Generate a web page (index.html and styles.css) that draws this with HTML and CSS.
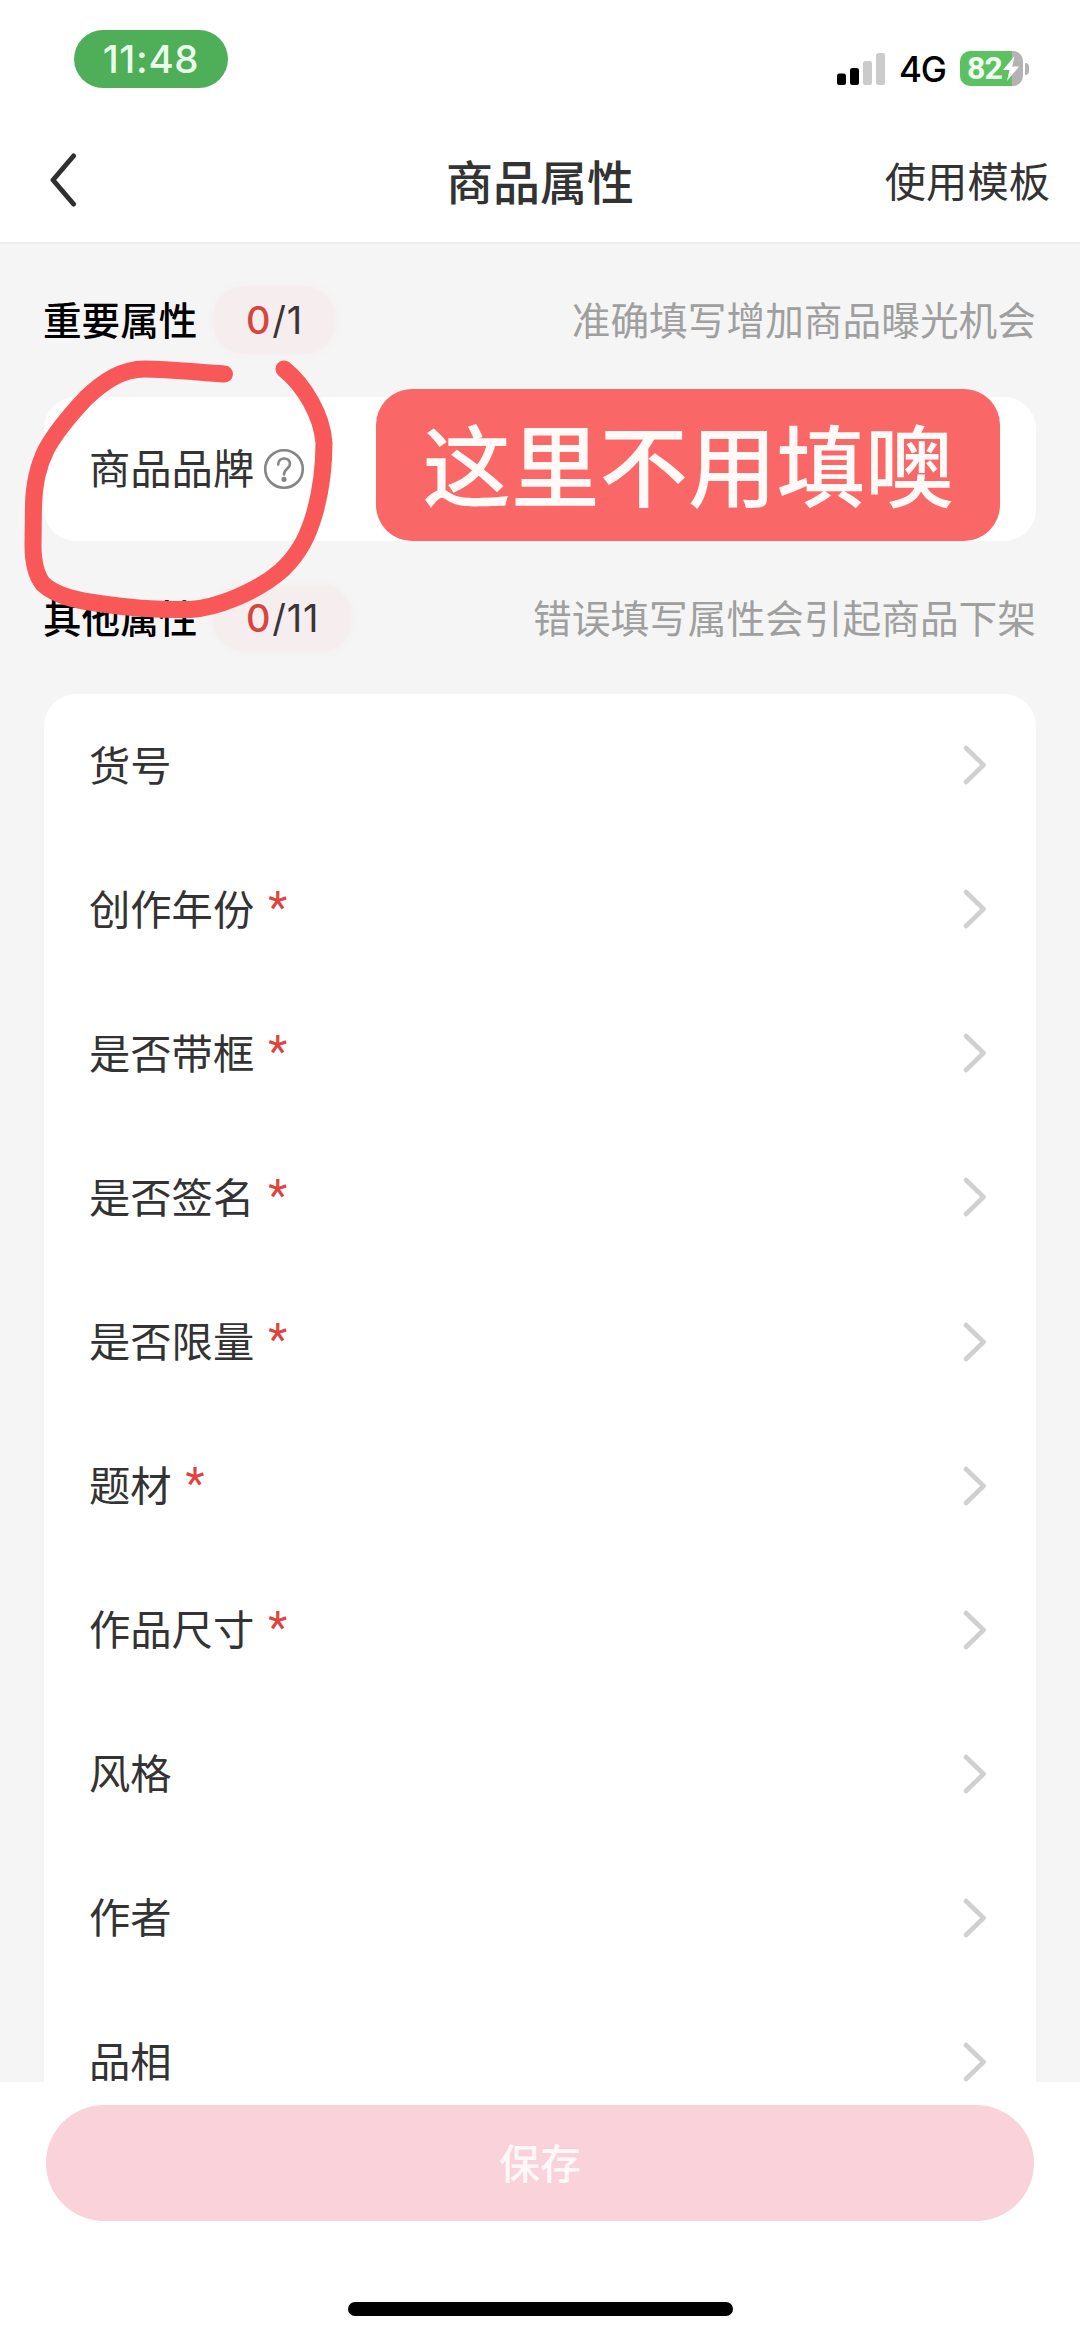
FILE: index.html
```html
<!DOCTYPE html>
<html lang="zh-CN">
<head>
<meta charset="utf-8">
<title>商品属性</title>
<link rel="stylesheet" href="styles.css">
</head>
<body>
<svg class="defs" width="0" height="0" aria-hidden="true">
  <symbol id="chevron" viewBox="0 0 24 40"><path d="M3 3 L20.5 20 L3 37" fill="none" stroke="currentColor" stroke-width="4.6" stroke-linecap="round" stroke-linejoin="round"/></symbol>
</svg>
<div class="screen">
  <div class="status">
    <div class="time">11:48</div>
    <div class="status-right">
      <svg class="signal" width="48" height="32" viewBox="0 0 48 32">
        <rect x="0" y="20.5" width="9" height="11.5" rx="2.5" fill="#000"/>
        <rect x="13" y="15" width="9" height="17" rx="2.5" fill="#000"/>
        <rect x="26" y="8" width="9" height="24" rx="2.5" fill="#cbcbcb"/>
        <rect x="39" y="0" width="9" height="32" rx="2.5" fill="#cbcbcb"/>
      </svg>
      <span class="net">4G</span>
      <div class="battery">
        <div class="battery-body">
          <span class="battery-num">82</span>
          <svg width="16" height="25" viewBox="0 0 16 25"><path d="M11.5 0 L0 14 H6.5 L4 25 L16 10.5 H9.2 Z" fill="#fff"/></svg>
        </div>
        <div class="battery-tip"></div>
      </div>
    </div>
  </div>

  <div class="nav">
    <svg class="back" width="28" height="54" viewBox="0 0 28 54"><path d="M24.5 3 L4 27 L24.5 51" fill="none" stroke="#2f2f2f" stroke-width="5" stroke-linecap="round" stroke-linejoin="round"/></svg>
    <h1 class="title">商品属性</h1>
    <a class="template">使用模板</a>
  </div>

  <main class="content">
    <div class="section-head">
      <h2 class="section-title">重要属性</h2>
      <div class="count"><b>0</b>/1</div>
      <p class="hint">准确填写增加商品曝光机会</p>
    </div>
    <div class="card brand">
      <div class="row">
        <span class="label">商品品牌</span>
        <svg class="help" width="42" height="42" viewBox="0 0 42 42" fill="none" stroke="#858585" stroke-width="2.6" stroke-linecap="round">
          <circle cx="21" cy="21" r="18.8"/>
          <path d="M15.2 16.5 C15.2 8.5 27 8.5 27 16 C27 20.5 21 20.5 21 26.5"/>
          <circle cx="21" cy="31.3" r="1.3" fill="#858585"/>
        </svg>
      </div>
      <div class="callout">这里不用填噢</div>
    </div>
    <div class="section-head second">
      <h2 class="section-title">其他属性</h2>
      <div class="count"><b>0</b>/11</div>
      <p class="hint">错误填写属性会引起商品下架</p>
    </div>
    <div class="card list">
      <div class="row"><span class="label">货号</span><svg class="chev"><use href="#chevron"/></svg></div>
      <div class="row"><span class="label">创作年份</span><i class="req">*</i><svg class="chev"><use href="#chevron"/></svg></div>
      <div class="row"><span class="label">是否带框</span><i class="req">*</i><svg class="chev"><use href="#chevron"/></svg></div>
      <div class="row"><span class="label">是否签名</span><i class="req">*</i><svg class="chev"><use href="#chevron"/></svg></div>
      <div class="row"><span class="label">是否限量</span><i class="req">*</i><svg class="chev"><use href="#chevron"/></svg></div>
      <div class="row"><span class="label">题材</span><i class="req">*</i><svg class="chev"><use href="#chevron"/></svg></div>
      <div class="row"><span class="label">作品尺寸</span><i class="req">*</i><svg class="chev"><use href="#chevron"/></svg></div>
      <div class="row"><span class="label">风格</span><svg class="chev"><use href="#chevron"/></svg></div>
      <div class="row"><span class="label">作者</span><svg class="chev"><use href="#chevron"/></svg></div>
      <div class="row"><span class="label">品相</span><svg class="chev"><use href="#chevron"/></svg></div>
    </div>
    <svg class="scribble" width="340" height="280" viewBox="0 350 340 280">
      <path d="M224.5 374 C195 372 165 369 145 369 C121 369 103 382 86 398 C70 415 56 431 46 450 C38 466 34 485 33.5 505 L33 545 C33 560 36 575 43 584 C57 597 80 601 103 604 C130 608 165 610 190 609.5 C215 608 256 593 282 570 C301 552 309 533 315 512 C321 490 324 465 324 443 C322 415 304 385 284 369" fill="none" stroke="#f95858" stroke-width="17" stroke-linecap="round" stroke-linejoin="round"/>
    </svg>
  </main>

  <div class="footer">
    <button class="save">保存</button>
    <div class="home"></div>
  </div>
</div>
</body>
</html>
```
FILE: styles.css
```css
* {
  box-sizing: border-box;
  margin: 0;
  padding: 0;
}

body {
  width: 1080px;
  background: #fff;
  font-family: "Noto Sans CJK SC", sans-serif;
  color: #333;
}

.defs {
  display: block;
}

.screen {
  display: flex;
  flex-direction: column;
  height: 2338px;
  overflow: hidden;
}

/* status bar */
.status {
  display: flex;
  justify-content: space-between;
  align-items: flex-start;
  height: 120px;
  padding: 30px 51px 0 74px;
}

.time {
  width: 154px;
  height: 58px;
  border-radius: 29px;
  background: #4fae58;
  color: #eaffea;
  font: 500 38.5px/59px Inter, sans-serif;
  letter-spacing: 0.7px;
  text-align: center;
}

.status-right {
  display: flex;
  align-items: center;
  height: 35px;
  margin-top: 21px;
}

.net {
  width: 60px;
  margin-left: 14px;
  font: 500 35px/38px Inter, sans-serif;
  letter-spacing: -1.2px;
  color: #000;
}

.battery {
  display: flex;
  align-items: center;
  gap: 2px;
  margin-left: 1px;
}

.battery-body {
  display: flex;
  align-items: center;
  gap: 1px;
  width: 63px;
  height: 35px;
  padding-left: 7px;
  border-radius: 10px;
  background: linear-gradient(90deg, #5cc163 0 52.5px, #b3b3b3 52.5px);
}

.battery-num {
  width: 35px;
  font: 700 32px/35px Roboto, sans-serif;
  letter-spacing: -0.8px;
  color: #efffef;
}

.battery-tip {
  width: 4px;
  height: 12px;
  border-radius: 0 4px 4px 0;
  background: #b3b3b3;
}

/* navigation bar */
.nav {
  display: grid;
  grid-template-columns: 1fr auto 1fr;
  align-items: center;
  height: 124px;
  padding: 0 30px 2px 49px;
  border-bottom: 2px solid #ececec;
}

.title {
  margin-top: -1px;
  padding-right: 19px;
  font-size: 47px;
  font-weight: 500;
  line-height: 60px;
}

.template {
  justify-self: end;
  margin-top: -2px;
  font-size: 41.3px;
  font-weight: 400;
  line-height: 60px;
}

/* scrolling content; the list runs on beneath the footer */
.content {
  position: relative;
  flex: none;
  height: 1838px;
  padding: 37px 44px 0;
  background: #f5f5f5;
}

.section-head {
  display: flex;
  align-items: center;
  height: 78px;
}

.section-title {
  width: 171px;
  margin-top: -4px;
  margin-left: -1px;
  font-size: 38.6px;
  font-weight: 500;
  line-height: 60px;
  color: #000;
}

.count {
  height: 66px;
  padding: 0 32px;
  border-radius: 30px;
  background: #f5edee;
  box-shadow: 0 0 6px 1px #f5edee;
  font: 400 38px/67px Inter, sans-serif;
  letter-spacing: 0.8px;
  color: #3a3438;
}

.count b {
  margin-right: 1px;
  font-weight: 500;
  color: #d6453f;
}

.hint {
  margin-top: -4px;
  margin-left: auto;
  font-size: 38.7px;
  font-weight: 400;
  line-height: 60px;
  color: #9f9f9f;
}

.card {
  border-radius: 32px;
  background: #fff;
}

.brand {
  position: relative;
  margin-top: 38px;
}

.section-head.second {
  margin-top: 38px;
}

.list {
  margin-top: 37px;
}

.row {
  display: flex;
  align-items: center;
  height: 144.1px;
  padding: 0 49px 0 45px;
}

.label {
  margin-top: -7px;
  font-size: 41.3px;
  font-weight: 400;
  line-height: 36px;
}

.help {
  margin-left: 9px;
}

.req {
  margin-left: 14px;
  margin-top: -5px;
  font: 400 44px/50px Roboto, sans-serif;
  color: #e0423e;
}

.chev {
  width: 24px;
  height: 40px;
  margin-top: -2px;
  margin-left: auto;
  color: #d0d0d0;
}

/* notes laid over the form */
.callout {
  position: absolute;
  left: 332px;
  top: -8px;
  width: 624px;
  height: 152px;
  border-radius: 36px;
  background: #fa6767;
  color: #fffaf8;
  font-size: 88.5px;
  font-weight: 500;
  line-height: 144px;
  text-align: center;
}

.scribble {
  position: absolute;
  left: 0;
  top: 106px;
}

/* bottom bar */
.footer {
  position: relative;
  display: flex;
  flex-direction: column;
  align-items: center;
  padding-top: 23px;
}

.save {
  width: 988px;
  height: 116px;
  border: 0;
  border-radius: 58px;
  background: #f9d2da;
  color: #fff8f8;
  font: 500 41px/112px "Noto Sans CJK SC", sans-serif;
  padding-bottom: 4px;
}

.home {
  width: 385px;
  height: 14px;
  margin-top: 81px;
  border-radius: 7px;
  background: #000;
}
```
